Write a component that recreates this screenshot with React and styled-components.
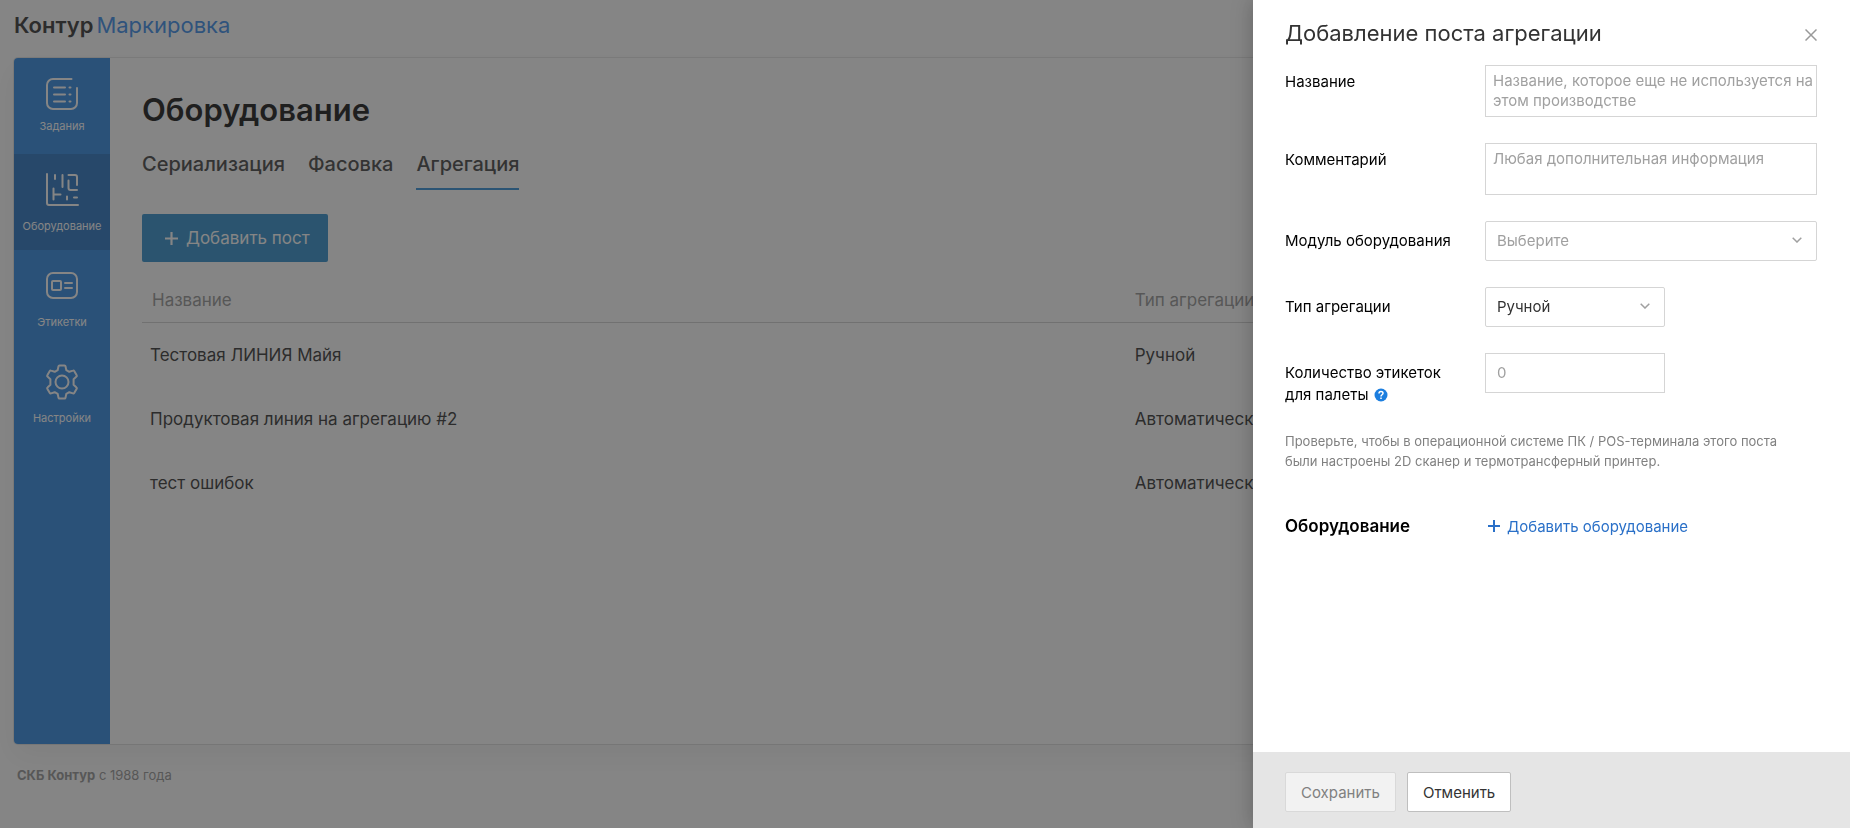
import { useState } from 'react';
import styled, { createGlobalStyle } from 'styled-components';

const menu = [
  { id: 'tasks', name: 'Задания', iconGap: 7 },
  { id: 'equipment', name: 'Оборудование', iconGap: 11 },
  { id: 'labels', name: 'Этикетки', iconGap: 11 },
  { id: 'settings', name: 'Настройки', iconGap: 11 },
];

const tabs = ['Сериализация', 'Фасовка', 'Агрегация'];

const posts = [
  { id: 1, name: 'Тестовая ЛИНИЯ Майя', type: 'Ручной' },
  { id: 2, name: 'Продуктовая линия на агрегацию #2', type: 'Автоматический' },
  { id: 3, name: 'тест ошибок', type: 'Автоматический' },
];

const icons = {
  tasks: (
    <>
      <path d="M25.5 1H7a6 6 0 0 0-6 6v18a6 6 0 0 0 6 6h18a6 6 0 0 0 6-6V10" />
      <path d="M8 9.5h11M8 16.5h11M8 23.5h11M23.5 9.5h1M23.5 16.5h1M23.5 23.5h1" />
    </>
  ),
  equipment: (
    <>
      <path d="M1 0v29a2 2 0 0 0 2 2h29" />
      <path d="M9 1v4M16.5 1v12M22.500 1H29a2 2 0 0 1 2 2v8M22.500 6.500V14a2 2 0 0 0 2 2H31M7.500 14.500v11M7.500 20.500h7M21 22.500v3M28 23.500h3" />
    </>
  ),
  labels: (
    <>
      <rect x="1" y="3" width="30" height="25" rx="6" />
      <rect x="6" y="11" width="9" height="9" rx="1" />
      <path d="M19 13h7M19 18h7" />
    </>
  ),
  settings: (
    <>
      <path d="M13.500-.5h5a1 1 0 0 1 1 .8l.8 3.800 3 1.700 3.700-1.200a1 1 0 0 1 1.200.4l2.500 4.300a1 1 0 0 1-.2 1.300l-2.900 2.600v5.600l2.900 2.600a1 1 0 0 1 .2 1.300l-2.500 4.300a1 1 0 0 1-1.200.4l-3.700-1.200-3 1.700-.8 3.800a1 1 0 0 1-1 .8h-5a1 1 0 0 1-1-.8l-.8-3.800-3-1.700-3.700 1.200a1 1 0 0 1-1.200-.4l-2.500-4.300a1 1 0 0 1 .2-1.300l2.900-2.600v-5.600l-2.900-2.600a1 1 0 0 1-.2-1.300l2.500-4.300a1 1 0 0 1 1.200-.4l3.700 1.200 3-1.700.8-3.800a1 1 0 0 1 1-.8z" />
      <circle cx="16" cy="16" r="6.500" />
    </>
  ),
};

const PlusIcon = ({ size }) => (
  <svg width={size} height={size} viewBox="0 0 12 12" fill="none" stroke="currentColor" strokeWidth="2">
    <path d="M6 0v12M0 6h12" />
  </svg>
);

const SelectBox = ({ id, muted, children }) => (
  <SelectWrap>
    <Select id={id} $muted={muted}>{children}</Select>
    <Chevron viewBox="0 0 10 6" aria-hidden="true">
      <path d="M.7.7 5 5 9.300.7" />
    </Chevron>
  </SelectWrap>
);

const App = () => {
  const [activeTab, setActiveTab] = useState('Агрегация');

  return (
    <>
      <GlobalStyle />
      <Page>
        <Header>
          <Logo href="#"><b>Контур</b><span>Маркировка</span></Logo>
        </Header>
        <Panel>
          <SideMenu>
            {menu.map((item) => (
              <MenuItem key={item.id} href={`#${item.id}`} $active={item.id === 'equipment'}>
                <MenuIcon viewBox="-1 -1 34 34" $gap={item.iconGap}>{icons[item.id]}</MenuIcon>
                {item.name}
              </MenuItem>
            ))}
          </SideMenu>
          <Content>
            <PageTitle>Оборудование</PageTitle>
            <Tabs>
              {tabs.map((tab) => (
                <Tab key={tab} $active={tab === activeTab} onClick={() => setActiveTab(tab)}>{tab}</Tab>
              ))}
            </Tabs>
            <AddPost><PlusIcon size={13} />Добавить пост</AddPost>
            <Table>
              <thead>
                <tr><HeadCell $first>Название</HeadCell><HeadCell>Тип агрегации</HeadCell></tr>
              </thead>
              <tbody>
                {posts.map((post) => (
                  <tr key={post.id}><Cell>{post.name}</Cell><Cell>{post.type}</Cell></tr>
                ))}
              </tbody>
            </Table>
          </Content>
        </Panel>
        <Footer><b>СКБ Контур</b> с 1988 года</Footer>
      </Page>
      <Overlay />
      <Drawer role="dialog" aria-labelledby="drawer-title">
        <DrawerBody>
          <DrawerHead>
            <DrawerTitle id="drawer-title">Добавление поста агрегации</DrawerTitle>
            <CloseButton aria-label="Закрыть">
              <svg width="12" height="12" viewBox="0 0 12 12" stroke="currentColor" strokeWidth="1.500">
                <path d="M.5.5l11 11M11.500.5l-11 11" />
              </svg>
            </CloseButton>
          </DrawerHead>
          <Form>
            <Field>
              <Label htmlFor="name" $compact>Название</Label>
              <TextArea id="name" placeholder="Название, которое еще не используется на этом производстве" />
            </Field>
            <Field>
              <Label htmlFor="comment" $compact>Комментарий</Label>
              <TextArea id="comment" placeholder="Любая дополнительная информация" />
            </Field>
            <Field>
              <Label htmlFor="module">Модуль оборудования</Label>
              <SelectBox id="module" muted><option>Выберите</option></SelectBox>
            </Field>
            <Field $short>
              <Label htmlFor="type">Тип агрегации</Label>
              <SelectBox id="type"><option>Ручной</option><option>Автоматический</option></SelectBox>
            </Field>
            <Field $short>
              <Label htmlFor="count">
                Количество этикеток для палеты
                <Help viewBox="0 0 14 14" aria-hidden="true">
                  <circle cx="7" cy="7" r="6.500" />
                  <path d="M5 5.500C5 2.800 9 2.800 9 5.300 9 6.800 7 6.700 7 8.400M7 9.600V11" />
                </Help>
              </Label>
              <Input id="count" placeholder="0" />
            </Field>
          </Form>
          <Note>
            Проверьте, чтобы в операционной системе ПК / POS-терминала этого поста были настроены 2D сканер и термотрансферный принтер.
          </Note>
          <Equipment>
            <SectionTitle>Оборудование</SectionTitle>
            <AddEquipment><PlusIcon size={12} />Добавить оборудование</AddEquipment>
          </Equipment>
        </DrawerBody>
        <DrawerFooter>
          <Button disabled>Сохранить</Button>
          <Button>Отменить</Button>
        </DrawerFooter>
      </Drawer>
    </>
  );
};

const GlobalStyle = createGlobalStyle`
  * {
    box-sizing: border-box;
  }
  body {
    margin: 0;
    background-color: #fff;
    color: #222;
    font-family: Inter, "Liberation Sans", sans-serif;
    font-size: 15px;
  }
  button, input, select, textarea {
    font: inherit;
  }
`;

const Page = styled.div`
  display: flex;
  flex-direction: column;
  min-height: 100vh;
`;
const Header = styled.header`
  display: flex;
  align-items: center;
  height: 58px;
  padding: 0 14px 8px;
`;
const Logo = styled.a`
  display: flex;
  gap: 3px;
  font-size: 22px;
  color: #2a83e8;
  text-decoration: none;

  b {
    font-weight: 600;
    color: #222;
  }
`;
const Panel = styled.div`
  display: flex;
  flex: 1;
  margin: 0 14px;
  border-radius: 4px;
  box-shadow: 0 0 0 1px rgba(0, 0, 0, 0.1), 0 12px 28px rgba(0, 0, 0, 0.06);
`;
const SideMenu = styled.nav`
  flex: none;
  width: 96px;
  border-radius: 4px 0 0 4px;
  background-color: #1c7edf;
`;
const MenuItem = styled.a`
  display: flex;
  flex-direction: column;
  align-items: center;
  height: 96px;
  padding-top: 19px;
  background-color: ${({ $active }) => ($active ? '#1568bb' : 'transparent')};
  color: #fff;
  font-size: 11px;
  line-height: 16px;
  text-decoration: none;
`;
const MenuIcon = styled.svg`
  width: 34px;
  height: 34px;
  margin-bottom: ${({ $gap }) => $gap}px;
  overflow: visible;
  fill: none;
  stroke: currentColor;
  stroke-width: 2;
  stroke-linecap: round;
  stroke-linejoin: round;
`;
const Content = styled.main`
  flex: 1;
  padding: 32px;
`;
const PageTitle = styled.h1`
  margin: 0;
  font-size: 31px;
  line-height: 40px;
  font-weight: 600;
  color: #000;
`;
const Tabs = styled.div`
  display: flex;
  gap: 23px;
  margin-top: 20px;
`;
const Tab = styled.button`
  height: 40px;
  padding: 0 0 10px;
  border: 0;
  border-bottom: 2px solid ${({ $active }) => ($active ? '#1e86d4' : 'transparent')};
  background: none;
  color: #333;
  font-size: 20px;
  font-weight: 500;
`;
const AddPost = styled.button`
  display: flex;
  align-items: center;
  gap: 8px;
  height: 48px;
  margin-top: 24px;
  padding: 0 18px 0 23px;
  border: 0;
  border-radius: 2px;
  background-color: #1e86c8;
  color: #fff;
  font-size: 17px;
`;
const Table = styled.table`
  width: 100%;
  margin-top: 16px;
  border-collapse: collapse;
  font-size: 17px;
  line-height: 24px;
  text-align: left;
`;
const HeadCell = styled.th`
  width: ${({ $first }) => ($first ? '59.25%' : 'auto')};
  height: 44px;
  padding: 0 8px 0 ${({ $first }) => ($first ? '10px' : '8px')};
  border-bottom: 1px solid #ccc;
  color: #8c8c8c;
  font-weight: 400;
`;
const Cell = styled.td`
  height: 64px;
  padding: 2px 8px 0;
`;
const Footer = styled.footer`
  height: 84px;
  padding: 19px 17px;
  color: #8c8c8c;
  font-size: 13px;
  line-height: 24px;
`;
const Overlay = styled.div`
  position: fixed;
  inset: 0;
  background-color: rgba(51, 51, 51, 0.6);
`;
const Drawer = styled.aside`
  position: fixed;
  top: 0;
  right: 0;
  bottom: 0;
  display: flex;
  flex-direction: column;
  width: 597px;
  background-color: #fff;
  box-shadow: 0 0 20px rgba(0, 0, 0, 0.25);
`;
const DrawerBody = styled.div`
  flex: 1;
  padding: 16px 33px 0 32px;
  overflow: auto;
`;
const DrawerHead = styled.div`
  display: flex;
  justify-content: space-between;
  align-items: center;
  height: 33px;
`;
const DrawerTitle = styled.h2`
  margin: 0;
  color: #333;
  font-size: 22px;
  line-height: 32px;
  font-weight: 400;
`;
const CloseButton = styled.button`
  display: flex;
  padding: 4px 0 0;
  border: 0;
  background: none;
  color: #999;
`;
const Form = styled.form`
  display: flex;
  flex-direction: column;
  gap: 26px;
  margin-top: 16px;
`;
const Field = styled.div`
  display: grid;
  grid-template-columns: 200px ${({ $short }) => ($short ? '180px' : '1fr')};
  align-items: start;
`;
const Label = styled.label`
  padding: ${({ $compact }) => ($compact ? '6px' : '9px')} 24px 0 0;
  color: #000;
  line-height: 22px;
`;
const Help = styled.svg`
  width: 14px;
  height: 14px;
  margin-left: 6px;
  vertical-align: -2px;
  fill: #1c7edf;

  path {
    fill: none;
    stroke: #fff;
    stroke-width: 1.5;
  }
`;
const TextArea = styled.textarea`
  display: block;
  width: 100%;
  height: 52px;
  padding: 5px 0 5px 7px;
  border: 1px solid #d5d5d5;
  line-height: 20px;
  resize: none;
  overflow: hidden;

  &::placeholder {
    color: #a0a0a0;
  }
`;
const SelectWrap = styled.div`
  position: relative;
`;
const Select = styled.select`
  width: 100%;
  height: 40px;
  padding: 0 32px 2px 11px;
  appearance: none;
  border: 1px solid #d5d5d5;
  border-radius: 2px;
  background-color: #fff;
  color: ${({ $muted }) => ($muted ? '#a0a0a0' : '#333')};
`;
const Chevron = styled.svg`
  position: absolute;
  top: 16px;
  right: 15px;
  width: 10px;
  height: 6px;
  fill: none;
  stroke: #a0a0a0;
  stroke-width: 1.5;
  pointer-events: none;
`;
const Input = styled.input`
  width: 100%;
  height: 40px;
  padding: 0 11px 2px;
  border: 1px solid #d5d5d5;

  &::placeholder {
    color: #a0a0a0;
  }
`;
const Note = styled.p`
  max-width: 500px;
  margin: 25px 0 0;
  color: #808080;
  font-size: 13px;
  line-height: 20px;
`;
const Equipment = styled.div`
  display: grid;
  grid-template-columns: 203px 1fr;
  align-items: center;
  margin-top: 43px;
`;
const SectionTitle = styled.h3`
  margin: 0;
  color: #000;
  font-size: 17px;
  line-height: 24px;
  font-weight: 600;
`;
const AddEquipment = styled.button`
  display: flex;
  align-items: center;
  gap: 7px;
  padding: 0;
  border: 0;
  background: none;
  color: #2a70c8;
`;
const DrawerFooter = styled.div`
  display: flex;
  gap: 11px;
  padding: 20px 32px 16px;
  background-color: #e5e5e5;
`;
const Button = styled.button`
  height: 40px;
  padding: 0 15px;
  border: 1px solid #bfbfbf;
  border-radius: 2px;
  background-color: #fff;
  color: #333;

  &:disabled {
    border-color: #d9d9d9;
    background-color: #f2f2f2;
    color: #808080;
  }
`;

export default App;
